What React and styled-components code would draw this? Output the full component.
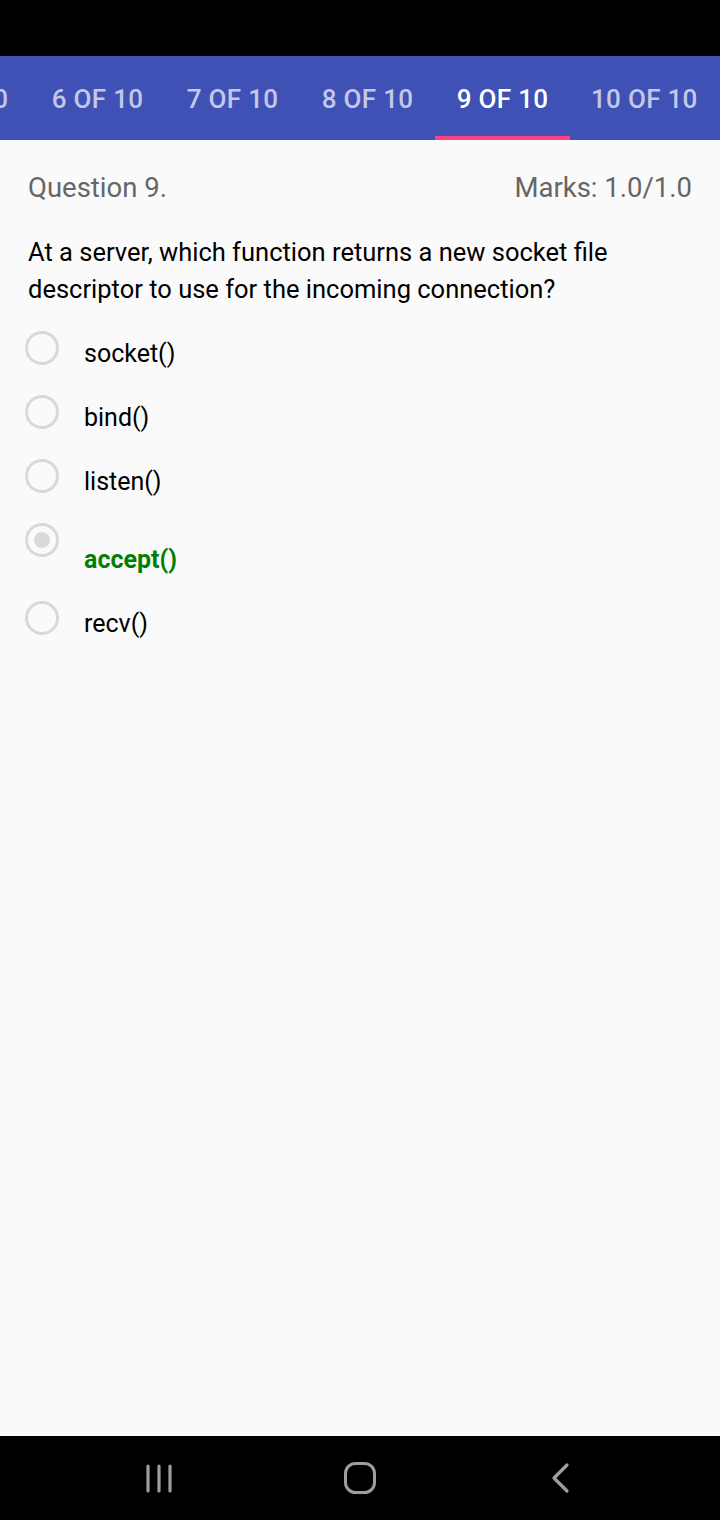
import React, { useState } from "react"
import styled, { createGlobalStyle } from "styled-components"

const GlobalStyle = createGlobalStyle`
	html, body {
		margin: 0;
		padding: 0;
		background: #000;
	}
	body {
		font-family: Roboto, "Noto Sans", Arial, sans-serif;
	}
`

const Screen = styled.div`
	width: 720px;
	height: 1520px;
	display: flex;
	flex-direction: column;
	overflow: hidden;
	background: #fafafa;
`

const StatusBar = styled.div`
	height: 56px;
	flex-shrink: 0;
	background: #000;
`

const TabBar = styled.div`
	height: 84px;
	flex-shrink: 0;
	background: #3f51b5;
	overflow: hidden;
`

const TabStrip = styled.div`
	display: flex;
	height: 100%;
	margin-left: -105px;
`

const Tab = styled.div`
	position: relative;
	flex-shrink: 0;
	min-width: 135px;
	padding: 0 21px;
	box-sizing: border-box;
	display: flex;
	align-items: center;
	justify-content: center;
	padding-top: 2px;
	font-size: 26px;
	font-weight: 500;
	letter-spacing: 0.3px;
	white-space: nowrap;
	color: ${p => (p.active ? "#fff" : "rgba(255, 255, 255, 0.7)")};

	&::after {
		content: "";
		display: ${p => (p.active ? "block" : "none")};
		position: absolute;
		left: 0;
		right: 0;
		bottom: 0;
		height: 4px;
		background: #ff4081;
	}
`

const Content = styled.div`
	flex: 1;
	padding: 30px 28px 0 28px;
`

const Header = styled.div`
	display: flex;
	justify-content: space-between;
	align-items: center;
	height: 34px;
	font-size: 27.5px;
	color: #666;
`

const Prompt = styled.p`
	margin: 30px 0 23px 0;
	font-size: 25.5px;
	line-height: 37px;
	color: #000;
`

const Options = styled.div`
	display: flex;
	flex-direction: column;
	gap: 24px;
	margin-left: -3px;
`

const Option = styled.label`
	display: flex;
	align-items: flex-start;
	cursor: pointer;
`

const Radio = styled.span`
	flex-shrink: 0;
	width: 34px;
	height: 34px;
	box-sizing: border-box;
	border: 3px solid #d9d9d9;
	border-radius: 50%;
	display: flex;
	align-items: center;
	justify-content: center;

	&::after {
		content: "";
		width: 16px;
		height: 16px;
		border-radius: 50%;
		background: #d9d9d9;
		display: ${p => (p.checked ? "block" : "none")};
	}
`

const OptionText = styled.span`
	margin-left: 25px;
	margin-top: ${p => (p.correct ? "20px" : "6px")};
	font-size: 25px;
	line-height: 34px;
	color: ${p => (p.correct ? "#008000" : "#000")};
	font-weight: ${p => (p.correct ? 700 : 400)};
`

const NavBar = styled.div`
	height: 84px;
	flex-shrink: 0;
	background: #000;
	display: flex;
	align-items: center;
	justify-content: center;
	gap: 141px;
`

const NavButton = styled.div`
	width: 60px;
	height: 60px;
	display: flex;
	align-items: center;
	justify-content: center;
`

const tabs = ["5 OF 10", "6 OF 10", "7 OF 10", "8 OF 10", "9 OF 10", "10 OF 10"]
const choices = ["socket()", "bind()", "listen()", "accept()", "recv()"]

const App = () => {
	const [selected] = useState(3)
	const answer = 3

	return (
		<Screen>
			<GlobalStyle />
			<StatusBar />
			<TabBar>
				<TabStrip>
					{tabs.map((t, i) => (
						<Tab key={t} active={i === 4}>
							{t}
						</Tab>
					))}
				</TabStrip>
			</TabBar>
			<Content>
				<Header>
					<span>Question 9.</span>
					<span>Marks: 1.0/1.0</span>
				</Header>
				<Prompt>
					At a server, which function returns a new socket file descriptor to use for the incoming connection?
				</Prompt>
				<Options>
					{choices.map((c, i) => (
						<Option key={c}>
							<Radio checked={i === selected} />
							<OptionText correct={i === answer}>{c}</OptionText>
						</Option>
					))}
				</Options>
			</Content>
			<NavBar>
				<NavButton>
					<svg width="30" height="30" viewBox="0 0 30 30">
						<g stroke="#9e9e9e" strokeWidth="3.2" strokeLinecap="round">
							<line x1="4" y1="3" x2="4" y2="28" />
							<line x1="15" y1="3" x2="15" y2="28" />
							<line x1="26" y1="3" x2="26" y2="28" />
						</g>
					</svg>
				</NavButton>
				<NavButton>
					<svg width="34" height="34" viewBox="0 0 34 34">
						<rect x="2.5" y="2.5" width="29" height="29" rx="10" fill="none" stroke="#9e9e9e" strokeWidth="3" />
					</svg>
				</NavButton>
				<NavButton>
					<svg width="22" height="32" viewBox="0 0 22 32">
						<polyline points="17,3 4,16 17,29" fill="none" stroke="#9e9e9e" strokeWidth="3.2" strokeLinecap="round" strokeLinejoin="round" />
					</svg>
				</NavButton>
			</NavBar>
		</Screen>
	)
}

export default App
